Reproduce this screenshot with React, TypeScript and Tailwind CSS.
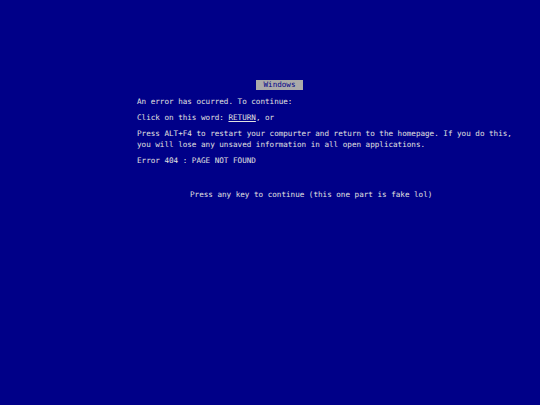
export default function App() {
  return (
    <div
      className="w-[540px] h-[405px] bg-[#000088] text-[#e0e0e0] text-[7.6px] leading-[11px] overflow-hidden"
      style={{ fontFamily: '"DejaVu Sans Mono", monospace' }}
    >
      <div className="pt-[80px] pl-[137px] flex flex-col">
        <div className="pl-[119px] leading-[10px] h-[10px]">
          <span className="bg-[#aaaaaa] text-[#000088] px-[7.5px] inline-block leading-[10px]">Windows</span>
        </div>
        <p className="mt-[5.5px]">An error has ocurred. To continue:</p>
        <p className="mt-[5px]">
          Click on this word: <span className="underline">RETURN</span>, or
        </p>
        <p className="mt-[5px]">
          Press ALT+F4 to restart your compurter and return to the homepage. If you do this,
          <br />
          you will lose any unsaved information in all open applications.
        </p>
        <p className="mt-[5px]">Error 404 : PAGE NOT FOUND</p>
        <p className="mt-[23px] pl-[53px]">Press any key to continue (this one part is fake lol)</p>
      </div>
    </div>
  );
}
